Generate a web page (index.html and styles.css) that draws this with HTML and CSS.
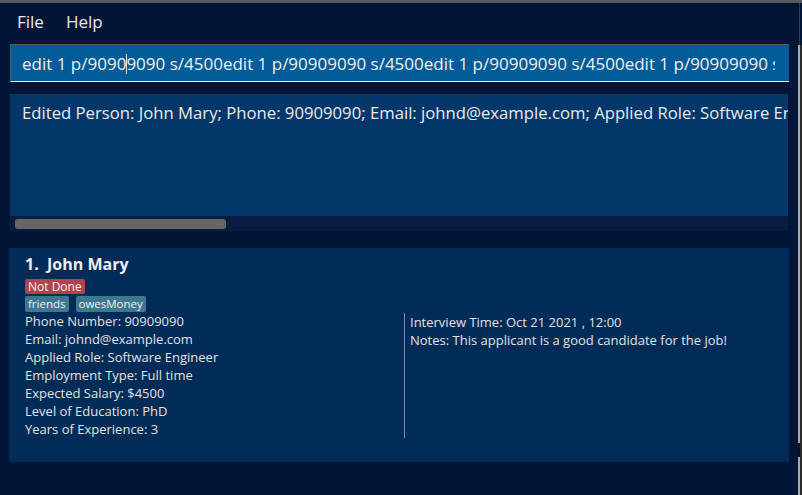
FILE: index.html
```html
<!DOCTYPE html>
<html>
<head>
<meta charset="utf-8">
<link rel="stylesheet" href="styles.css">
</head>
<body>
<div class="topstrip"></div>
<div class="app">
  <div class="main">
    <div class="menubar">
      <span class="menu-item">File</span>
      <span class="menu-item">Help</span>
    </div>
    <div class="command-box">
      <div class="command-clip">
        <div class="command-text">edit 1 p/9090<span class="caret"></span>9090 s/4500edit 1 p/90909090 s/4500edit 1 p/90909090 s/4500edit 1 p/90909090 s/4500</div>
      </div>
    </div>
    <div class="result-box">
      <div class="result-text">Edited Person: John Mary; Phone: 90909090; Email: johnd@example.com; Applied Role: Software Engineer; Employment Type: Full time</div>
      <div class="hscroll"><div class="hthumb"></div></div>
    </div>
    <div class="list">
      <div class="card">
        <div class="name">1.&nbsp;&nbsp;John Mary</div>
        <div class="status-row"><span class="status">Not Done</span></div>
        <div class="tags"><span class="tag">friends</span><span class="tag">owesMoney</span></div>
        <div class="details">
          <div class="col left">
            <div class="line">Phone Number: 90909090</div>
            <div class="line">Email: johnd@example.com</div>
            <div class="line">Applied Role: Software Engineer</div>
            <div class="line">Employment Type: Full time</div>
            <div class="line">Expected Salary: $4500</div>
            <div class="line">Level of Education: PhD</div>
            <div class="line">Years of Experience: 3</div>
          </div>
          <div class="col right">
            <div class="line">Interview Time: Oct 21 2021 , 12:00</div>
            <div class="line">Notes: This applicant is a good candidate for the job!</div>
          </div>
        </div>
      </div>
    </div>
  </div>
  <div class="edge"><div class="edge-top"></div><div class="edge-mid"></div><div class="edge-dark"></div><div class="edge-bot"></div></div>
</div>
</body>
</html>
```
FILE: styles.css
```css
html, body {
  margin: 0;
  padding: 0;
  background: #011637;
  overflow: hidden;
  width: 802px;
  height: 495px;
  font-family: "Open Sans", "DejaVu Sans", sans-serif;
  color: #e6e6e6;
}
.topstrip {
  height: 3px;
  background: #5a5a5a;
}
.app {
  display: flex;
  height: 492px;
}
.main {
  width: 798px;
  display: flex;
  flex-direction: column;
}
.menubar {
  height: 41px;
  display: flex;
  align-items: center;
  padding-left: 17px;
  gap: 22px;
  font-size: 17px;
  color: #e8e8e8;
  box-sizing: border-box;
  padding-bottom: 5px;
}
.command-box {
  margin-left: 10px;
  width: 779px;
  height: 38px;
  background: #015b96;
  border-top: 1px solid #5c5c5c;
  border-left: 1px solid #3e5e80;
  border-bottom: 1px solid #f2f2f2;
  box-sizing: border-box;
  display: flex;
  align-items: center;
  padding-left: 11px;
}
.command-clip {
  width: 753px;
  overflow: hidden;
}
.command-text {
  white-space: nowrap;
  font-size: 17px;
  color: #f0f0f0;
}
.caret {
  display: inline-block;
  width: 1px;
  height: 20px;
  background: #e0e0e0;
  vertical-align: -4px;
  margin: 0 -1px 0 0;
}
.result-box {
  margin-top: 12px;
  margin-left: 10px;
  width: 778px;
  height: 137px;
  background: #033769;
  display: flex;
  flex-direction: column;
  overflow: hidden;
}
.result-text {
  flex: 1;
  white-space: nowrap;
  font-size: 16.7px;
  color: #eaeaea;
  padding: 7px 0 0 12px;
}
.hscroll {
  height: 15px;
  background: #0a1c42;
  display: flex;
  align-items: center;
  padding-left: 5px;
}
.hthumb {
  width: 211px;
  height: 10px;
  border-radius: 3px;
  background: #666666;
}
.list {
  margin-top: 17px;
  padding-left: 9px;
  padding-right: 9px;
}
.card {
  width: 780px;
  height: 214px;
  background: #012c58;
  box-sizing: border-box;
  padding: 6px 0 0 16px;
  font-size: 13px;
  color: #e2e2e2;
}
.name {
  font-weight: 700;
  font-size: 16px;
  line-height: 20px;
  color: #eeeeee;
}
.status-row {
  margin-top: 3px;
  height: 16px;
}
.status {
  display: inline-block;
  background: #b4414f;
  color: #f2f2f2;
  font-size: 12px;
  line-height: 15px;
  padding: 0 3px;
  border-radius: 2px;
}
.tags {
  margin-top: 3px;
  display: flex;
  gap: 7px;
  height: 16px;
}
.tag {
  background: #3c788e;
  color: #eeeeee;
  font-size: 11.5px;
  line-height: 15px;
  padding: 0 3px;
  border-radius: 2px;
}
.details {
  display: flex;
}
.col .line {
  line-height: 18px;
  white-space: nowrap;
}
.col.left {
  width: 379px;
}
.col.right {
  border-left: 1px solid #7f8ea0;
  padding-left: 5px;
  height: 125px;
  margin-top: 1px;
}
.edge {
  width: 4px;
  display: flex;
  flex-direction: column;
}
.edge-top {
  height: 42px;
  background: linear-gradient(to right, #011637 1px, #3a3a3a 1px, #3a3a3a 2px, #011637 2px);
}
.edge-mid {
  height: 398px;
  background: linear-gradient(to right, #a8a8a8 2px, #2a2a2a 2px);
}
.edge-dark {
  height: 14px;
  background: linear-gradient(to right, #111111 2px, #2a2a2a 2px);
}
.edge-bot {
  flex: 1;
  background: linear-gradient(to right, #a8a8a8 2px, #2a2a2a 2px);
}
```
